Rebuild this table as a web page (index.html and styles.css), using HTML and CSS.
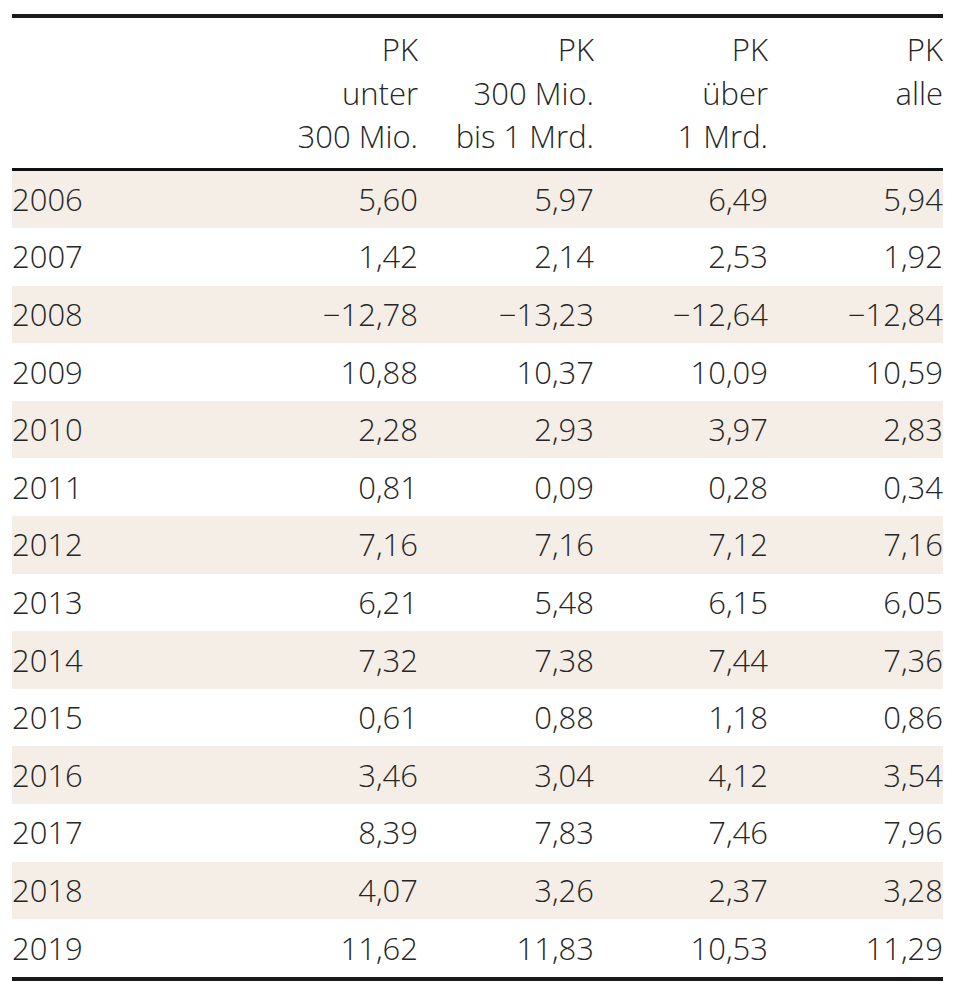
FILE: index.html
```html
<!DOCTYPE html>
<html lang="de">
<head>
<meta charset="utf-8">
<title>Performance Pensionskassen</title>
<link rel="stylesheet" href="styles.css">
</head>
<body>
<table class="perf">
  <colgroup>
    <col class="c-year"><col class="c-a"><col class="c-b"><col class="c-c"><col class="c-d">
  </colgroup>
  <thead>
    <tr>
      <th></th>
      <th>PK<br>unter<br>300 Mio.</th>
      <th>PK<br>300 Mio.<br>bis 1 Mrd.</th>
      <th>PK<br>über<br>1 Mrd.</th>
      <th>PK<br>alle</th>
    </tr>
  </thead>
  <tbody>
    <tr class="shade"><td>2006</td><td>5,60</td><td>5,97</td><td>6,49</td><td>5,94</td></tr>
    <tr><td>2007</td><td>1,42</td><td>2,14</td><td>2,53</td><td>1,92</td></tr>
    <tr class="shade"><td>2008</td><td>−12,78</td><td>−13,23</td><td>−12,64</td><td>−12,84</td></tr>
    <tr><td>2009</td><td>10,88</td><td>10,37</td><td>10,09</td><td>10,59</td></tr>
    <tr class="shade"><td>2010</td><td>2,28</td><td>2,93</td><td>3,97</td><td>2,83</td></tr>
    <tr><td>2011</td><td>0,81</td><td>0,09</td><td>0,28</td><td>0,34</td></tr>
    <tr class="shade"><td>2012</td><td>7,16</td><td>7,16</td><td>7,12</td><td>7,16</td></tr>
    <tr><td>2013</td><td>6,21</td><td>5,48</td><td>6,15</td><td>6,05</td></tr>
    <tr class="shade"><td>2014</td><td>7,32</td><td>7,38</td><td>7,44</td><td>7,36</td></tr>
    <tr><td>2015</td><td>0,61</td><td>0,88</td><td>1,18</td><td>0,86</td></tr>
    <tr class="shade"><td>2016</td><td>3,46</td><td>3,04</td><td>4,12</td><td>3,54</td></tr>
    <tr><td>2017</td><td>8,39</td><td>7,83</td><td>7,46</td><td>7,96</td></tr>
    <tr class="shade"><td>2018</td><td>4,07</td><td>3,26</td><td>2,37</td><td>3,28</td></tr>
    <tr><td>2019</td><td>11,62</td><td>11,83</td><td>10,53</td><td>11,29</td></tr>
  </tbody>
</table>
</body>
</html>
```
FILE: styles.css
```css
html, body {
  margin: 0;
  padding: 0;
  background: #ffffff;
}
body {
  padding: 14px 17px 0 12px;
  font-family: "Open Sans", "Liberation Sans", sans-serif;
  font-weight: 300;
  font-size: 31px;
  color: #262626;
}
.perf {
  width: 931px;
  border-collapse: collapse;
  table-layout: fixed;
  border-top: 4px solid #1a1a1a;
  border-bottom: 4px solid #1a1a1a;
}
.c-year { width: 231px; }
.c-a { width: 175px; }
.c-b { width: 176px; }
.c-c { width: 174px; }
.c-d { width: 175px; }
.perf th {
  font-weight: 300;
  text-align: right;
  vertical-align: top;
  line-height: 43.5px;
  padding: 10px 0 9px 0;
  border-bottom: 3px solid #111;
}
.perf td {
  height: 57.6px;
  padding: 0;
  text-align: right;
  vertical-align: middle;
  line-height: 1;
  white-space: nowrap;
}
.perf td:first-child {
  text-align: left;
}
.perf tr.shade td {
  background: #f4eee6;
}
```
